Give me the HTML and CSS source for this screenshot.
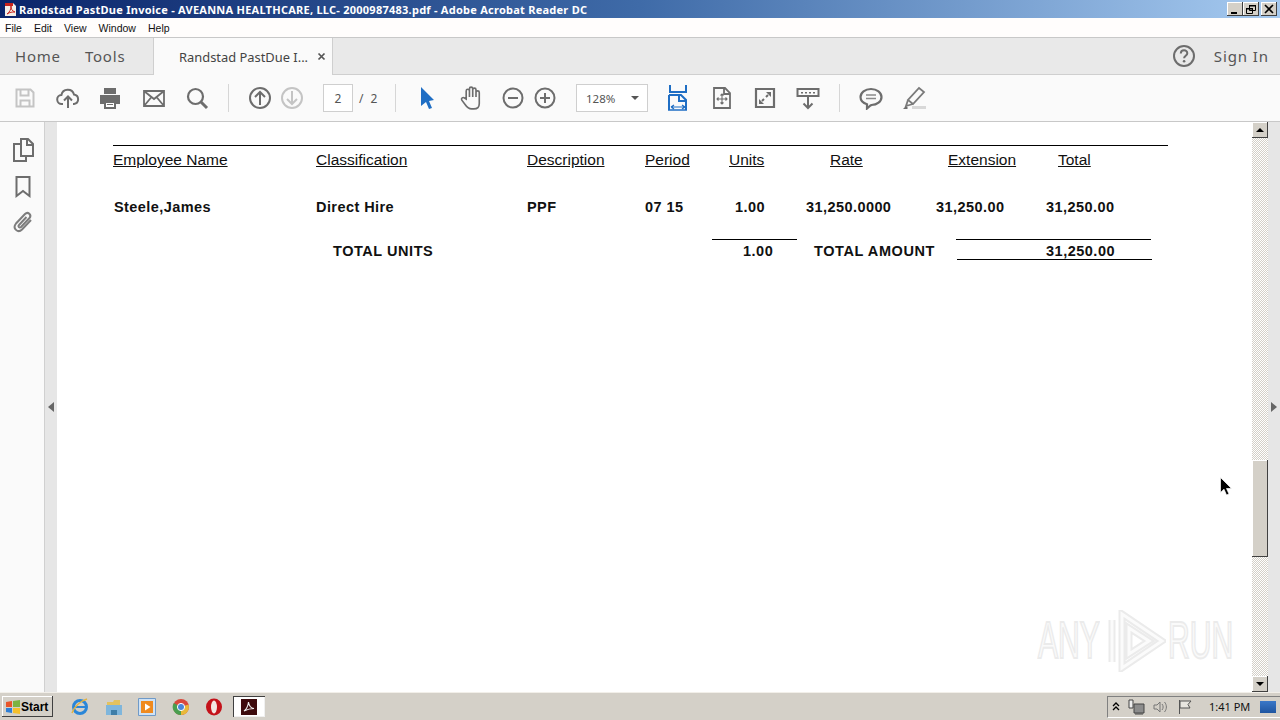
FILE: index.html
```html
<!DOCTYPE html>
<html lang="en">
<head>
    <meta charset="UTF-8">
    <title>Randstad PastDue Invoice - Adobe Acrobat Reader DC</title>
    <link rel="stylesheet" href="styles.css">
</head>
<body>
    <div class="titlebar">
        <svg class="app-icon" width="15" height="15" viewBox="0 0 15 15"><path d="M2 1h8l3 3v10H2z" fill="#f4efe8"/><path d="M2 1h8v3H2z" fill="#c8231c"/><path d="M4 12c3-2 4-5 4-8 0 3 1 5 4 6-3 0-5 0-8 2z" fill="none" stroke="#c8231c" stroke-width="1"/></svg>
        <span class="title-text">Randstad PastDue Invoice - AVEANNA HEALTHCARE, LLC- 2000987483.pdf - Adobe Acrobat Reader DC</span>
        <div class="win-btns">
            <span class="win-btn"><svg width="14" height="12" viewBox="0 0 14 12"><path d="M3 9h6v2H3z" fill="#000"/></svg></span>
            <span class="win-btn"><svg width="14" height="12" viewBox="0 0 14 12"><path d="M5.500 2.500h6v5h-6zM2.500 5.500h6v5h-6z" fill="#d4d0c8" stroke="#000"/><path d="M5 2h7v1.500H5zM2 5h7v1.500H2z" fill="#000"/></svg></span>
            <span class="win-btn"><svg width="14" height="12" viewBox="0 0 14 12"><path d="M3 2l8 8M11 2l-8 8" stroke="#000" stroke-width="1.600"/></svg></span>
        </div>
    </div>

    <div class="menubar">
        <span>File</span><span>Edit</span><span>View</span><span>Window</span><span>Help</span>
    </div>

    <div class="tabbar">
        <div class="nav-tabs"><span>Home</span><span>Tools</span></div>
        <div class="doc-tab">
            <span>Randstad PastDue I...</span>
            <svg width="9" height="9" viewBox="0 0 9 9"><path d="M1.500 1.500l6 6M7.500 1.500l-6 6" stroke="#555" stroke-width="1.700"/></svg>
        </div>
        <div class="tab-right">
            <svg width="24" height="24" viewBox="0 0 24 24"><circle cx="12" cy="12" r="10" fill="none" stroke="#6d6d6d" stroke-width="2"/><path d="M8.800 9.500c0-4.300 6.500-4.300 6.500-.300 0 2.500-3.200 2.500-3.200 5" fill="none" stroke="#6d6d6d" stroke-width="2"/><circle cx="12.100" cy="17.300" r="1.300" fill="#6d6d6d"/></svg>
            <span>Sign In</span>
        </div>
    </div>

    <div class="toolbar">
        <svg class="tool" viewBox="0 0 24 24"><path d="M3.500 3.500h14l3 3v14h-17z M7.500 3.500v6h8v-6 M7.500 20.500v-6h9v6" fill="none" stroke="#c4c4c4" stroke-width="2"/></svg>
        <svg class="tool" viewBox="0 0 24 24"><path d="M7 18H6a4.500 4.500 0 0 1-.6-9A6.500 6.500 0 0 1 18 8.500a4.800 4.800 0 0 1 0 9.500h-1M12 22V11M8 14.500l4-4 4 4" fill="none" stroke="#6d6d6d" stroke-width="2"/></svg>
        <svg class="tool" viewBox="1 0 24 24"><path d="M6 2h12v6H6z" fill="#6d6d6d"/><path d="M2 9h20v9h-4v-3H6v3H2z" fill="#6d6d6d"/><path d="M7 16h10v6H7z" fill="#fff" stroke="#6d6d6d" stroke-width="2"/><path d="M9 18h6v1H9z" fill="#6d6d6d"/></svg>
        <svg class="tool" viewBox="0 0 24 24"><path d="M2 5h20v15H2z M2 5l10 8 10-8 M2 20l7.500-9 M22 20l-7.500-9" fill="none" stroke="#6d6d6d" stroke-width="1.800"/></svg>
        <svg class="tool" viewBox="0 0 24 24"><circle cx="10.500" cy="10.500" r="7.500" fill="none" stroke="#6d6d6d" stroke-width="2.200"/><path d="M16 16l6 6" stroke="#6d6d6d" stroke-width="3"/></svg>
        <span class="sep"></span>
        <div class="tool-pair">
            <svg class="tool" viewBox="0 0 24 24"><circle cx="12" cy="12" r="10" fill="none" stroke="#6d6d6d" stroke-width="2"/><path d="M12 19V6M7 11l5-5 5 5" fill="none" stroke="#6d6d6d" stroke-width="2"/></svg>
            <svg class="tool" viewBox="0 0 24 24"><circle cx="12" cy="12" r="10" fill="none" stroke="#c4c4c4" stroke-width="2"/><path d="M12 5v13M7 13l5 5 5-5" fill="none" stroke="#c4c4c4" stroke-width="2"/></svg>
        </div>
        <div class="page-nav">
            <span class="page-box">2</span>
            <span class="page-total">/ 2</span>
        </div>
        <span class="sep"></span>
        <svg class="tool" viewBox="0 0 24 24"><path d="M6 1l13 13-5 1 3 7-3 1-3-7-5 4z" fill="#1f6ec4"/></svg>
        <svg class="tool" viewBox="0 1 21 22"><path d="M7 13V5.500a1.500 1.500 0 0 1 3 0V11 3.500a1.500 1.500 0 0 1 3 0V11 4.500a1.500 1.500 0 0 1 3 0V11 7a1.500 1.500 0 0 1 3 0v10c0 3-2 5-5 5h-2c-3 0-4-1-6-4l-3-4c-1-2 1-3 2.500-2z" fill="none" stroke="#6d6d6d" stroke-width="1.500"/></svg>
        <div class="tool-pair">
            <svg class="tool" viewBox="0 0 24 24"><circle cx="12" cy="12" r="9.500" fill="none" stroke="#6d6d6d" stroke-width="2"/><path d="M7 12h10" stroke="#6d6d6d" stroke-width="2"/></svg>
            <svg class="tool" viewBox="0 0 24 24"><circle cx="12" cy="12" r="9.500" fill="none" stroke="#6d6d6d" stroke-width="2"/><path d="M7 12h10M12 7v10" stroke="#6d6d6d" stroke-width="2"/></svg>
        </div>
        <div class="zoom-box">
            <span>128%</span>
            <i class="caret"></i>
        </div>
        <svg class="tool tool-fit" viewBox="1 0 24 26"><path d="M4 0v7h16V0M3 10h12l5 5v10 M3 10v15 M13 10v6h7" fill="none" stroke="#1f6ec4" stroke-width="2"/><path d="M5 22h14M5 22l3-2M5 22l3 2M19 22l-3-2M19 22l-3 2" stroke="#1f6ec4" stroke-width="1.200"/><path d="M2 25h19" stroke="#1f6ec4" stroke-width="1.500"/></svg>
        <svg class="tool" viewBox="0 0 24 24"><path d="M4 2h11l5 5v15H4z M14 2v6h6" fill="none" stroke="#6d6d6d" stroke-width="1.800"/><path d="M12 8v10M7 13h10M10.500 9.500L12 8l1.500 1.500M10.500 16.500L12 18l1.500-1.500M8.500 11.500L7 13l1.500 1.500M15.500 11.500L17 13l-1.500 1.500" fill="none" stroke="#6d6d6d" stroke-width="1.100"/></svg>
        <svg class="tool" viewBox="0 0 24 24"><path d="M3 3h18v18H3z" fill="none" stroke="#6d6d6d" stroke-width="2.200"/><path d="M13 6h5v5zM11 18H6v-5z" fill="#6d6d6d"/><path d="M15 9l-2 2M9 15l2-2" stroke="#6d6d6d" stroke-width="2"/></svg>
        <svg class="tool" viewBox="0 0 24 24"><path d="M1.500 3h21v7h-21z" fill="none" stroke="#6d6d6d" stroke-width="2"/><path d="M5 6h2v1.500H5zM9 6h2v1.500H9zM13 6h2v1.500h-2zM17 6h2v1.500h-2z" fill="#6d6d6d"/><path d="M12 11v11M7.500 17.500L12 22l4.500-4.500" fill="none" stroke="#6d6d6d" stroke-width="2"/></svg>
        <span class="sep"></span>
        <svg class="tool" viewBox="0 0 24 24"><path d="M12 3c6 0 10.500 3.400 10.500 8s-4.500 8-10 8l-1 .5-3.500 3v-4.300C4 17 1.500 14.300 1.500 11 1.500 6.400 6 3 12 3z" fill="none" stroke="#6d6d6d" stroke-width="2.200"/><path d="M7 9h10M7 12.500h10" stroke="#8a8a8a" stroke-width="1.300"/></svg>
        <svg class="tool" viewBox="0 0 24 24"><path d="M17 2l5 4-11 12-5-4z M6 14l-2 6 7-2" fill="none" stroke="#7a7a7a" stroke-width="1.800"/><path d="M10 20h14v3H10z" fill="#d8d8d8"/><path d="M1 23l3-3 2 2-1 1z" fill="#6d6d6d"/></svg>
    </div>

    <div class="workspace">
        <div class="side-rail">
            <svg width="24" height="24" viewBox="0 0 24 24"><path d="M10 1h7l5 5v12H10z M16 1v6h6 M10 6H3v17h12v-5" fill="none" stroke="#6d6d6d" stroke-width="2"/></svg>
            <svg width="24" height="24" viewBox="0 0 24 24"><path d="M5.500 3h13v19l-6.500-5-6.500 5z" fill="none" stroke="#6d6d6d" stroke-width="2"/></svg>
            <svg width="24" height="24" viewBox="0 0 24 24"><path d="M20 10l-9 9.500c-4 4-10-1-6-6L14 4c3-3 7 1 4.500 4L10 17c-1.500 1.500-3.500-.5-2-2l7.500-8" fill="none" stroke="#7d7d7d" stroke-width="2"/></svg>
        </div>
        <div class="strip"><i class="arrow-left"></i></div>
        <div class="doc-page">
            <div class="doc-rule"></div>
            <div class="row row-head">
                <span class="c1">Employee Name</span>
                <span class="c2">Classification</span>
                <span class="c3">Description</span>
                <span class="c4">Period</span>
                <span class="c5">Units</span>
                <span class="c6">Rate</span>
                <span class="c7">Extension</span>
                <span class="c8">Total</span>
            </div>
            <div class="row row-item">
                <span class="i1">Steele,James</span>
                <span class="i2">Direct Hire</span>
                <span class="i3">PPF</span>
                <span class="i4">07 15</span>
                <span class="i5">1.00</span>
                <span class="i6">31,250.0000</span>
                <span class="i7">31,250.00</span>
                <span class="i8">31,250.00</span>
            </div>
            <div class="row row-total">
                <span class="t1">TOTAL UNITS</span>
                <span class="t2">1.00</span>
                <span class="t3">TOTAL AMOUNT</span>
                <span class="t4">31,250.00</span>
            </div>
        </div>
        <div class="scrollbar">
            <span class="sb-btn"><i class="tri-up"></i></span>
            <div class="sb-track"><div class="sb-thumb"></div></div>
            <span class="sb-btn"><i class="tri-down"></i></span>
        </div>
        <div class="strip strip-right"><i class="arrow-right"></i></div>
    </div>

    <div class="taskbar">
        <div class="start-btn">
            <svg width="16" height="16" viewBox="0 0 16 16"><path d="M1 3l6-1v6H1z" fill="#e8552a"/><path d="M8 2l7-1v7H8z" fill="#7cb342"/><path d="M1 9h6v5l-6-1z" fill="#2f7fd6"/><path d="M8 9h7v6l-7-1z" fill="#f5c02c"/></svg>
            <span>Start</span>
        </div>
        <div class="quick">
            <svg width="18" height="18" viewBox="0 0 18 18"><circle cx="9" cy="9" r="6.500" fill="none" stroke="#2a86d8" stroke-width="3"/><path d="M3 9h12" stroke="#2a86d8" stroke-width="2"/><path d="M1 15c2-6 8-12 15-14" fill="none" stroke="#e3b341" stroke-width="1.500"/></svg>
            <svg width="18" height="18" viewBox="0 0 18 18"><path d="M2 4h6l1-2h6v5H2z" fill="#e3c25e"/><path d="M1 7h16v10H1z" fill="#7fb6dc"/><path d="M6 12h6v5H6z" fill="#3f7ea8"/></svg>
            <svg width="18" height="18" viewBox="0 0 18 18"><path d="M.5.500h17v17H.5z" fill="#cfe2f5" stroke="#6f9ac8"/><path d="M3 3h12v12H3z" fill="#ef8a1f"/><path d="M7 5.500l5.500 3.500L7 12.500z" fill="#fff"/></svg>
            <svg width="18" height="18" viewBox="0 0 18 18"><circle cx="9" cy="9" r="8" fill="#d9483b"/><path d="M9 9L16.500 6.500A8 8 0 0 1 9 17z" fill="#e8b93a"/><path d="M9 9v8A8 8 0 0 1 1.800 5z" fill="#4a9e4f"/><circle cx="9" cy="9" r="3.600" fill="#4a86d8" stroke="#fff"/></svg>
            <svg width="18" height="18" viewBox="0 0 18 18"><ellipse cx="9" cy="9" rx="8" ry="8.500" fill="#c4121a"/><ellipse cx="9" cy="9" rx="3" ry="6.500" fill="#f3e6e2"/></svg>
        </div>
        <div class="task-btn">
            <svg width="16" height="16" viewBox="0 0 16 16"><path d="M0 0h16v16H0z" fill="#3d0a0c"/><path d="M3 12c3-2 4-5 4.500-9 .5 4 2 6 5.500 6.500-4 0-7 1-10 2.500z" fill="none" stroke="#eee" stroke-width="1.100"/></svg>
        </div>
        <div class="tray">
            <svg width="8" height="10" viewBox="0 0 8 10"><path d="M1 4l3-3 3 3M1 8l3-3 3 3" fill="none" stroke="#000" stroke-width="1.300"/></svg>
            <svg width="17" height="16" viewBox="0 0 17 16"><path d="M6 5h10v9H6z" fill="#8c8c8c" stroke="#444"/><path d="M1 1h4v8H1z" fill="#eee" stroke="#444"/><path d="M7 15h8" stroke="#444"/></svg>
            <svg width="16" height="16" viewBox="0 0 16 16"><path d="M1 6h3l3-3v10l-3-3H1z" fill="#d4d0c8" stroke="#777"/><path d="M9 5c1.500 2 1.500 4 0 6M11.500 3c2.500 3 2.500 7 0 10" fill="none" stroke="#777"/></svg>
            <svg width="16" height="16" viewBox="0 0 16 16"><path d="M2.500 1v14" stroke="#555"/><path d="M3 2h11l-3 3.500 2 3.500H3z" fill="#e8e6e0" stroke="#555"/></svg>
            <span class="clock">1:41 PM</span>
            <span class="show-desktop"></span>
        </div>
    </div>

    <div class="watermark">
        <span>ANY</span>
        <svg width="58" height="62" viewBox="0 0 58 62">
            <path d="M4 10v42M14 4l40 27-40 27zM21 18l20 13-20 13z" fill="none" stroke="#ebebeb" stroke-width="7"/>
            <path d="M4 10v42M14 4l40 27-40 27zM21 18l20 13-20 13z" fill="none" stroke="#fbfbfb" stroke-width="3"/>
        </svg>
        <span class="wm-run">RUN</span>
    </div>

    <svg class="mouse" width="12" height="19" viewBox="0 0 12 19"><path d="M.5.500v15l3.500-3.300 2.500 5.800 2.500-1-2.500-5.500h5z" fill="#000" stroke="#fff" stroke-width=".7"/></svg>
</body>
</html>
```

FILE: styles.css
```css
html, body { margin: 0; height: 100%; }
body {
    width: 1280px;
    height: 720px;
    overflow: hidden;
    display: flex;
    flex-direction: column;
    position: relative;
    font-family: "Liberation Sans", Arial, sans-serif;
    background: #fff;
}

/* window chrome */
.titlebar {
    height: 18px;
    flex: none;
    display: flex;
    align-items: center;
    padding-left: 3px;
    background: linear-gradient(to right, #0a246a 0%, #3f6ba8 50%, #a6caf0 100%);
    color: #fff;
    font: bold 11px "Noto Sans", sans-serif;
    letter-spacing: .25px;
}
.app-icon { margin-right: 1px; }
.title-text { white-space: nowrap; }
.win-btns { margin-left: auto; margin-right: 3px; display: flex; }
.win-btn {
    width: 16px;
    height: 14px;
    background: #d4d0c8;
    box-shadow: inset -1px -1px #404040, inset 1px 1px #fff;
    display: flex;
    align-items: center;
    justify-content: center;
}
.win-btn:last-child { margin-left: 2px; }

.menubar {
    height: 19px;
    flex: none;
    display: flex;
    align-items: center;
    padding-left: 5px;
    gap: 12px;
    background: #fffdfc;
    border-bottom: 1px solid #c8c8c8;
    font: 10.500px "Liberation Sans", sans-serif;
    color: #111;
}

.tabbar {
    height: 36px;
    flex: none;
    display: flex;
    background: #e9e9e9;
    border-bottom: 1px solid #cfcfcf;
    color: #555;
}
.nav-tabs {
    width: 153px;
    box-sizing: border-box;
    padding-left: 15px;
    display: flex;
    align-items: center;
    gap: 24px;
    font: 15px "Noto Sans", sans-serif;
    letter-spacing: .8px;
}
.doc-tab {
    width: 180px;
    height: 37px;
    box-sizing: border-box;
    padding-left: 25px;
    display: flex;
    align-items: center;
    gap: 9px;
    background: #fafafa;
    border-left: 1px solid #cfcfcf;
    border-right: 1px solid #cfcfcf;
    font: 12.900px "Noto Sans", sans-serif;
    color: #444;
    white-space: nowrap;
}
.tab-right {
    margin-left: auto;
    padding-right: 11px;
    display: flex;
    align-items: center;
    gap: 18px;
    font: 15px "Noto Sans", sans-serif;
    letter-spacing: .9px;
}

.toolbar {
    height: 47px;
    flex: none;
    box-sizing: border-box;
    padding-left: 13px;
    display: flex;
    align-items: center;
    gap: 19px;
    background: #fafafa;
    border-bottom: 1px solid #c8c8c8;
}
.tool { width: 24px; height: 24px; flex: none; }
.tool-fit { height: 26px; }
.tool-pair { display: flex; gap: 8px; }
.sep { width: 1px; height: 28px; background: #d6d6d6; }
.page-nav {
    display: flex;
    align-items: center;
    gap: 6px;
    width: 53px;
    color: #555;
    font: 12px "Noto Sans", sans-serif;
}
.page-box {
    width: 30px;
    height: 28px;
    flex: none;
    box-sizing: border-box;
    border: 1px solid #cfcfcf;
    background: #fff;
    display: flex;
    align-items: center;
    justify-content: center;
}
.page-total { white-space: nowrap; letter-spacing: 2px; }
.zoom-box {
    width: 72px;
    height: 28px;
    box-sizing: border-box;
    border: 1px solid #cfcfcf;
    background: #fff;
    padding: 0 8px 0 9px;
    display: flex;
    align-items: center;
    justify-content: space-between;
    font: 11.500px "Noto Sans", sans-serif;
    color: #555;
}
.caret {
    border-left: 4px solid transparent;
    border-right: 4px solid transparent;
    border-top: 4px solid #555;
}

/* main area */
.workspace { flex: 1; display: flex; min-height: 0; }
.side-rail {
    width: 45px;
    flex: none;
    box-sizing: border-box;
    padding: 16px 0 0 11px;
    display: flex;
    flex-direction: column;
    gap: 12px;
    background: #fafafa;
    border-right: 1px solid #d0d0d0;
}
.strip {
    width: 12px;
    flex: none;
    background: #e6e6e6;
    display: flex;
    align-items: center;
    justify-content: center;
}
.arrow-left {
    border-top: 5px solid transparent;
    border-bottom: 5px solid transparent;
    border-right: 6px solid #666;
}
.arrow-right {
    border-top: 5px solid transparent;
    border-bottom: 5px solid transparent;
    border-left: 6px solid #666;
}

.doc-page {
    flex: 1;
    box-sizing: border-box;
    padding: 23px 84px 0 56px;
    background: #fff;
    color: #111;
}
.doc-rule { height: 1px; background: #000; }
.row { display: flex; white-space: nowrap; }
.row-head { margin-top: 5px; font-size: 15.500px; line-height: 18px; text-decoration: underline; }
.row-item { margin-top: 29px; font-size: 14.500px; font-weight: bold; line-height: 18px; letter-spacing: .43px; }
.row-total { margin-top: 26px; height: 20px; font-size: 14.500px; font-weight: bold; line-height: 18px; letter-spacing: .5px; }

/* column widths, measured off the invoice */
.c1 { width: 203px; }
.c2 { width: 211px; }
.c3 { width: 118px; }
.c4 { width: 84px; }
.c5 { width: 101px; }
.c6 { width: 118px; }
.c7 { width: 110px; }
.i1 { width: 203px; padding-left: 1px; margin-right: -1px; }
.i2 { width: 211px; }
.i3 { width: 118px; }
.i4 { width: 90px; }
.i5 { width: 71px; }
.i6 { width: 130px; }
.i7 { width: 110px; }
.t1 { width: 379px; margin-left: 220px; letter-spacing: .55px; }
.t2 { width: 71px; margin-left: 31px; position: relative; }
.t2::before {
    content: "";
    position: absolute;
    left: -31px;
    top: -3px;
    width: 85px;
    height: 1px;
    background: #000;
}
.t3 { width: 143px; letter-spacing: .6px; }
.t4 {
    width: 195px;
    box-sizing: border-box;
    padding-left: 89px;
    border-bottom: 1px solid #000;
    height: 18px;
    position: relative;
}
.t4::before {
    content: "";
    position: absolute;
    left: -1px;
    top: -3px;
    width: 195px;
    height: 1px;
    background: #000;
}

.scrollbar { width: 16px; flex: none; display: flex; flex-direction: column; }
.sb-btn {
    height: 16px;
    flex: none;
    background: #d4d0c8;
    box-shadow: inset -1px -1px #404040, inset 1px 1px #fff;
    display: flex;
    align-items: center;
    justify-content: center;
}
.tri-up { border: 4px solid transparent; border-top: 0; border-bottom: 4px solid #000; }
.tri-down { border: 4px solid transparent; border-bottom: 0; border-top: 4px solid #000; }
.sb-track {
    flex: 1;
    background: repeating-conic-gradient(#d4d0c8 0 25%, #fff 0 50%) 0 0 / 2px 2px;
}
.sb-thumb {
    height: 97px;
    margin-top: 322px;
    background: #d4d0c8;
    box-shadow: inset -1px -1px #404040, inset 1px 1px #fff;
}

/* windows taskbar */
.taskbar {
    height: 28px;
    flex: none;
    box-sizing: border-box;
    border-top: 1px solid #f2efe9;
    display: flex;
    align-items: center;
    background: #d4d0c8;
}
.start-btn {
    width: 51px;
    height: 21px;
    margin-left: 2px;
    box-sizing: border-box;
    padding-left: 3px;
    display: flex;
    align-items: center;
    box-shadow: inset -1px -1px #404040, inset 1px 1px #fff;
    font: bold 12px "Liberation Sans", sans-serif;
    color: #000;
}
.quick { display: flex; gap: 15.500px; margin-left: 18px; }
.task-btn {
    width: 32px;
    height: 21px;
    margin-left: 10px;
    background: #fff;
    box-shadow: inset 1px 1px #404040, inset -1px -1px #f0f0f0;
    display: flex;
    align-items: center;
    justify-content: center;
}
.tray {
    margin-left: auto;
    height: 22px;
    width: 173px;
    box-sizing: border-box;
    padding-left: 4px;
    display: flex;
    align-items: center;
    gap: 8px;
    border-left: 1px solid #808080;
    border-top: 1px solid #808080;
    border-bottom: 1px solid #fff;
    font: 11px "Noto Sans", sans-serif;
    color: #111;
}
.clock { margin-left: 8px; white-space: nowrap; }
.show-desktop {
    width: 16px;
    height: 12px;
    margin-left: 2px;
    background: linear-gradient(#3a78c8, #1f55a0);
}

/* overlays */
.watermark {
    position: absolute;
    left: 1038px;
    top: 610px;
    display: flex;
    align-items: center;
    gap: 8px;
    color: #fafafa;
    font-size: 51px;
    line-height: 62px;
    -webkit-text-stroke: 2px #ebebeb;
}
.watermark span { display: block; width: 62px; transform: scaleX(.59); transform-origin: left center; }
.watermark .wm-run { margin-left: -6px; }
.mouse { position: absolute; left: 1220px; top: 477px; }
```
